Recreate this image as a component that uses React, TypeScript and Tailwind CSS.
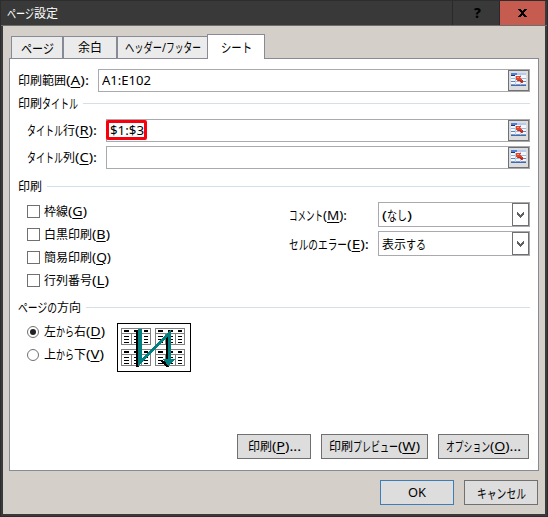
import { Fragment, ReactNode, useLayoutEffect, useRef, useState } from "react";

type Run = [text: string, width: number];

const KANA = /^[\u3040-\u30ff]+$/;

/* A run of glyphs condensed horizontally to a given width. "&X" marks an access key. */
function Fit({ text, width }: { text: string; width: number }) {
  const ref = useRef<HTMLSpanElement>(null);
  const [scale, setScale] = useState(1);
  useLayoutEffect(() => {
    if (ref.current) setScale(width / ref.current.getBoundingClientRect().width);
  }, []);
  const at = text.indexOf("&");
  const size = KANA.test(text) ? "text-[13px] leading-4" : "text-[12px] leading-4";
  return (
    <span className={`inline-block overflow-visible ${size}`} style={{ width }}>
      <span ref={ref} className="inline-block origin-left whitespace-pre" style={{ transform: `scaleX(${scale})` }}>
        {at < 0 ? (
          text
        ) : (
          <Fragment>
            {text.slice(0, at)}
            <span className="underline decoration-1 underline-offset-2">{text[at + 1]}</span>
            {text.slice(at + 2)}
          </Fragment>
        )}
      </span>
    </span>
  );
}

function Label({ runs, className = "" }: { runs: Run[]; className?: string }) {
  return (
    <span className={`inline-flex shrink-0 items-baseline whitespace-nowrap ${className}`}>
      {runs.map(([t, w], i) => (
        <Fit key={i} text={t} width={w} />
      ))}
    </span>
  );
}

function Tab({ runs, className }: { runs: Run[]; className: string }) {
  return (
    <div className={`flex h-[22px] items-center justify-center border border-b-0 border-[#888b95] bg-[#ebebeb] ${className}`}>
      <Label runs={runs} />
    </div>
  );
}

function RangeIcon() {
  return (
    <svg width="15" height="13" viewBox="0 0 15 13" shapeRendering="crispEdges">
      <rect width="15" height="13" fill="#f4f8fc" />
      <rect width="15" height="2" fill="#b4cbf3" />
      <rect width="6" height="2" fill="#4f80e0" />
      <rect y="2" width="4" height="1" fill="#24344f" />
      <path d="M0 5.500h15M0 8.500h15" stroke="#9db8dd" />
      <path d="M0 11.500h15" stroke="#7f9fd0" />
      <path d="M0 12.500h15" stroke="#4668ac" />
      <path d="M4.500 3v9M9.500 1v11" stroke="#b9cce6" />
      <path d="M0 8.500h4M11 8.500h4" stroke="#5f83bd" />
      <path d="M5 3h5v1h-1v1h1v1h1v1h1v3h-2v-1h-1v-1h-1v-1h-1v1h-1v-1h-1z" fill="#e0452c" />
      <path d="M6 4h2v1h-2z" fill="#f79a7c" />
      <path d="M7 8h2v1h1v1h1v-1h1v-2h-1v1h-1v-1h-3z" fill="#bd2b16" />
    </svg>
  );
}

function RangeField({ className, children }: { className: string; children?: ReactNode }) {
  return (
    <div className={`relative flex h-[23px] items-center justify-between border border-[#a9aab0] bg-white pl-[3px] ${className}`}>
      <span className="flex">{children}</span>
      <span className="flex h-[21px] w-[21px] justify-center border border-[#707070] bg-[#dddddd] pt-[2px]">
        <RangeIcon />
      </span>
    </div>
  );
}

function Section({ runs, className = "" }: { runs: Run[]; className?: string }) {
  return (
    <div className={`flex h-[17px] items-center gap-[5px] ${className}`}>
      <Label runs={runs} />
      <span className="h-px flex-1 bg-[#d5dfe8]" />
    </div>
  );
}

function Check({ runs }: { runs: Run[] }) {
  return (
    <div className="flex h-[23px] items-center gap-1">
      <span className="h-[13px] w-[13px] border border-[#707070] bg-white" />
      <Label runs={runs} />
    </div>
  );
}

function Radio({ runs, on }: { runs: Run[]; on?: boolean }) {
  return (
    <div className="flex h-[23px] items-center gap-[5px]">
      <span className="flex h-3 w-3 items-center justify-center rounded-full border border-[#707070] bg-white">
        {on && <span className="h-1.5 w-1.5 rounded-full bg-[#222]" />}
      </span>
      <Label runs={runs} />
    </div>
  );
}

function Select({ runs }: { runs: Run[] }) {
  return (
    <div className="flex h-[25px] w-[152px] items-center justify-between border border-[#a9aab0] bg-white pl-[3px]">
      <Label className="pt-px" runs={runs} />
      <span className="flex h-[23px] w-[17px] items-center justify-center border border-[#707070]">
        <svg width="7" height="6" viewBox="0 0 7 6" shapeRendering="crispEdges">
          <path d="M0 0h1v1h1v1h1v1h1v-1h1v-1h1v-1h1v3h-1v1h-1v1h-1v1h-1v-1h-1v-1h-1v-1h-1z" fill="#606060" />
        </svg>
      </span>
    </div>
  );
}

function Button({ runs, className }: { runs: Run[]; className: string }) {
  return (
    <div className={`flex h-[25px] items-center justify-center border bg-[#dddddd] ${className}`}>
      <Label runs={runs} />
    </div>
  );
}

function MiniSheet({ x, y }: { x: number; y: number }) {
  return (
    <g transform={`translate(${x} ${y})`}>
      <path d="M.5 .5h29v16h-29zM0 5.500h30M10.500 5v12M20.500 5v12" fill="none" stroke="#808080" />
      <path d="M3 3h5M13 3h5M23 3h4" stroke="#000" strokeWidth="2" />
      <path
        d="M3 8.500h5M3 11.500h5M3 14.500h5M13 8.500h5M13 11.500h5M13 14.500h5M23 8.500h4M23 11.500h4M23 14.500h4"
        stroke="#000"
      />
    </g>
  );
}

function PageOrder() {
  return (
    <svg width="74" height="49" viewBox="0 0 74 49" shapeRendering="crispEdges">
      <rect x=".5" y=".5" width="73" height="48" fill="#fff" stroke="#000" />
      <MiniSheet x={4} y={5} />
      <MiniSheet x={38} y={5} />
      <MiniSheet x={4} y={26} />
      <MiniSheet x={38} y={26} />
      <path d="M19 8h3v36h-3zM49 12h3v26h-3zM44 38h3l5 4v2h-3z" fill="#000" />
      <path d="M21 6h4v30L54 6v30h4l-6.500 7.500L46 36h5V14L21 43z" fill="#008080" />
    </svg>
  );
}

export default function App() {
  return (
    <div className="flex h-[517px] w-[548px] flex-col border border-[#2d2d30] bg-[#3a3a3b] font-['Noto_Sans','Noto_Sans_CJK_JP',sans-serif] text-[12px] leading-4 text-black">
      <div className="flex h-[25px] shrink-0 items-stretch border-b border-[#6d6d6d] bg-[#393939] pl-[6px] pr-[2px]">
        <span className="flex flex-1 items-center text-white">
          <Label runs={[["ページ", 27], ["設定", 24]]} />
        </span>
        <span className="flex w-[47px] items-center justify-center border-l border-[#29292c]">
          <span className="pl-[3px] text-[14px] font-extrabold">?</span>
        </span>
        <span className="flex w-[46px] items-center justify-center border-l border-[#29292c] bg-[#c65b4f]">
          <svg width="9" height="8" viewBox="0 0 9 8" shapeRendering="crispEdges">
            <path d="M0 0h3v1h1v1h1v-1h1v-1h3v1h-1v1h-1v1h-1v2h1v1h1v1h1v1h-3v-1h-1v-1h-1v1h-1v1h-3v-1h1v-1h1v-1h1v-2h-1v-1h-1v-1h-1z" fill="#000" />
          </svg>
        </span>
      </div>

      <div className="mx-[2px] mb-[2px] flex flex-1 flex-col bg-[#d4cfc8] px-[6px] pt-2">
        <div className="z-10 -mb-px flex h-[25px] items-end pb-px pl-[2px]">
          <Tab className="w-[52px]" runs={[["ページ", 33]]} />
          <Tab className="w-[54px]" runs={[["余白", 24]]} />
          <Tab className="w-[90px] border-r-0" runs={[["ヘッダー", 37], ["/", 4], ["フッター", 35]]} />
          <div className="-mb-px flex h-[25px] w-[58px] items-center justify-center border border-b-0 border-[#888b95] bg-white">
            <Label runs={[["シート", 31]]} />
          </div>
        </div>

        <div className="flex h-[413px] w-[530px] flex-col border border-[#888b95] bg-white px-2 pt-[10px]">
          <div className="flex items-center">
            <Label className="w-20" runs={[["印刷範囲", 48], ["(&A):", 23]]} />
            <RangeField className="flex-1">
              <Label runs={[["A1:E102", 49]]} />
            </RangeField>
          </div>

          <Section className="mt-[3px]" runs={[["印刷", 24], ["タイトル", 36]]} />

          <div className="mt-[7px] flex flex-col gap-1 pl-[9px]">
            <div className="flex items-center">
              <Label className="w-[79px]" runs={[["タイトル", 36], ["行", 12], ["(&R):", 22]]} />
              <RangeField className="flex-1">
                <Label runs={[["$1:$3", 34]]} />
                <span className="absolute -left-px top-0 h-5 w-[41px] rounded-[2px] border-[3px] border-[#f8000c]" />
              </RangeField>
            </div>
            <div className="flex items-center">
              <Label className="w-[79px]" runs={[["タイトル", 36], ["列", 12], ["(&C):", 22]]} />
              <RangeField className="flex-1" />
            </div>
          </div>

          <Section className="mt-[9px]" runs={[["印刷", 24]]} />

          <div className="mt-[5px] flex items-start justify-between pl-[9px]">
            <div className="flex flex-col">
              <Check runs={[["枠線", 24], ["(&G)", 19]]} />
              <Check runs={[["白黒印刷", 48], ["(&B)", 18]]} />
              <Check runs={[["簡易印刷", 48], ["(&Q)", 19]]} />
              <Check runs={[["行列番号", 48], ["(&L)", 17]]} />
            </div>
            <div className="mt-[2px] flex flex-col gap-1">
              <div className="flex items-center">
                <Label className="w-[89px] pt-px" runs={[["コメント", 34], ["(&M):", 24]]} />
                <Select runs={[["(", 5], ["なし", 20], [")", 5]]} />
              </div>
              <div className="flex items-center">
                <Label className="w-[89px] pt-px" runs={[["セルのエラー", 58], ["(&E):", 22]]} />
                <Select runs={[["表示", 24], ["する", 20]]} />
              </div>
            </div>
          </div>

          <Section className="mt-[7px]" runs={[["ページの", 39], ["方向", 24]]} />

          <div className="mt-1 flex items-start gap-3 pl-[9px]">
            <div className="flex w-[78px] flex-col">
              <Radio on runs={[["左", 12], ["から", 18], ["右", 12], ["(&D)", 19]]} />
              <Radio runs={[["上", 12], ["から", 18], ["下", 12], ["(&V)", 18]]} />
            </div>
            <div className="mt-[3px]">
              <PageOrder />
            </div>
          </div>

          <div className="mb-[11px] mt-auto flex justify-end gap-[10px] pr-px">
            <Button className="w-[74px] border-[#707070]" runs={[["印刷", 24], ["(&P)...", 29]]} />
            <Button className="w-[107px] border-[#707070]" runs={[["印刷", 24], ["プレビュー", 45], ["(&W)", 22]]} />
            <Button className="w-[91px] border-[#707070]" runs={[["オプション", 44], ["(&O)...", 31]]} />
          </div>
        </div>

        <div className="mt-[9px] flex justify-end gap-[10px] pr-px">
          <Button className="w-[74px] border-[#3c7fb8]" runs={[["OK", 18]]} />
          <Button className="w-[74px] border-[#707070]" runs={[["キャンセル", 49]]} />
        </div>
      </div>
    </div>
  );
}
